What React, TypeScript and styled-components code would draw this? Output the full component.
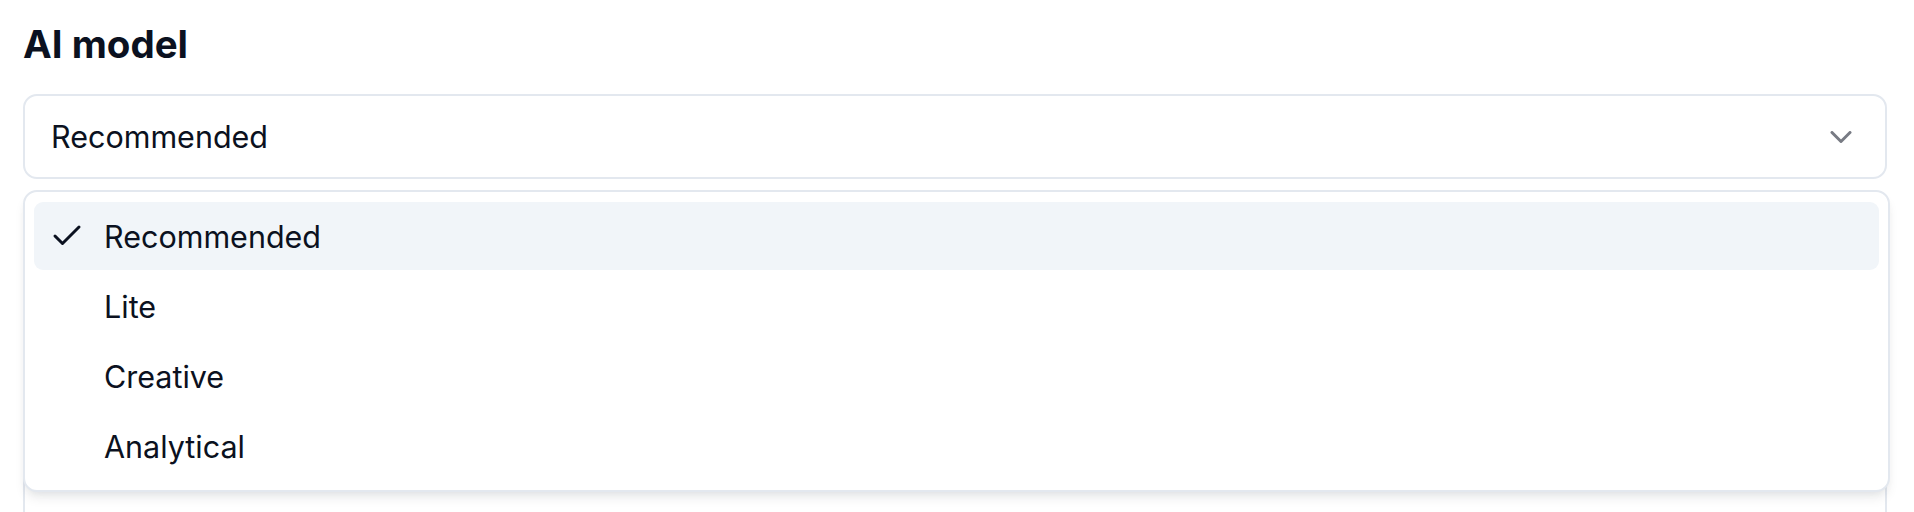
import React, { useState } from "react";
import styled, { createGlobalStyle } from "styled-components";
import { Check, ChevronDown } from "lucide-react";

const GlobalStyle = createGlobalStyle`
  html, body {
    margin: 0;
    padding: 0;
    background: #ffffff;
    overflow: hidden;
  }
  body {
    font-family: Inter, "Noto Sans", "Liberation Sans", sans-serif;
    color: #0b1120;
  }
  * { box-sizing: border-box; }
`;

const Page = styled.div`
  height: 512px;
  overflow: hidden;
  padding: 22px 27px 0 23px;
  display: flex;
  flex-direction: column;
`;

const Title = styled.h2`
  margin: 0 0 28px;
  font-size: 38.5px;
  line-height: 44px;
  font-weight: 700;
  letter-spacing: 0;
  color: #0b1120;
`;

const SelectWrap = styled.div`
  position: relative;
  flex-shrink: 0;
`;

const Trigger = styled.button`
  width: 100%;
  height: 85px;
  display: flex;
  align-items: center;
  justify-content: space-between;
  padding: 0 26px 0 26px;
  border: 2px solid #e3e8ef;
  border-radius: 14px;
  background: #ffffff;
  font-family: inherit;
  font-size: 30.5px;
  color: #0b1120;
  cursor: pointer;
  text-align: left;
`;

const ChevronIcon = styled(ChevronDown)`
  color: #0b1120;
  opacity: 0.55;
  flex-shrink: 0;
`;

const Popover = styled.div`
  position: absolute;
  top: calc(100% + 11px);
  left: 0;
  width: calc(100% + 3px);
  background: #ffffff;
  border: 2px solid #e3e8ef;
  border-radius: 14px;
  padding: 10px 9px 10px;
  display: flex;
  flex-direction: column;
  gap: 2px;
  box-shadow: 0 8px 12px -2px rgba(15, 23, 42, 0.08),
    0 4px 8px -4px rgba(15, 23, 42, 0.08);
  z-index: 10;
`;

const Item = styled.div<{ $active?: boolean }>`
  height: 68px;
  display: flex;
  align-items: center;
  gap: 19px;
  padding-left: 15px;
  border-radius: 9px;
  background: ${(p) => (p.$active ? "#f1f5f9" : "transparent")};
  font-size: 30.5px;
  color: #0b1120;
  cursor: default;
`;

const IconSlot = styled.span`
  width: 36px;
  height: 36px;
  display: flex;
  align-items: center;
  justify-content: center;
  flex-shrink: 0;
  color: #0b1120;
`;

const NextField = styled.div`
  flex-shrink: 0;
  margin-top: 24px;
  height: 360px;
  border: 2px solid #e3e8ef;
  border-radius: 14px;
  background: #ffffff;
`;

const options = ["Recommended", "Lite", "Creative", "Analytical"];

export default function App() {
  const [value, setValue] = useState("Recommended");
  return (
    <>
      <GlobalStyle />
      <Page>
        <Title>AI model</Title>
        <SelectWrap>
          <Trigger type="button">
            <span>{value}</span>
            <ChevronIcon size={36} strokeWidth={2} />
          </Trigger>
          <Popover>
            {options.map((o) => (
              <Item key={o} $active={o === value} onClick={() => setValue(o)}>
                <IconSlot>{o === value && <Check size={36} strokeWidth={2} />}</IconSlot>
                <span>{o}</span>
              </Item>
            ))}
          </Popover>
        </SelectWrap>
        <NextField />
      </Page>
    </>
  );
}
